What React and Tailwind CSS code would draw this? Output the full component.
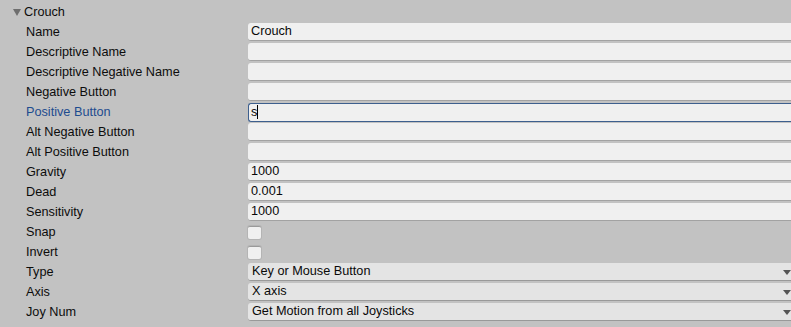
import { useState } from "react";

const rows = [
  { label: "Name", kind: "text", value: "Crouch" },
  { label: "Descriptive Name", kind: "text", value: "" },
  { label: "Descriptive Negative Name", kind: "text", value: "" },
  { label: "Negative Button", kind: "text", value: "" },
  { label: "Positive Button", kind: "text", value: "s", active: true },
  { label: "Alt Negative Button", kind: "text", value: "" },
  { label: "Alt Positive Button", kind: "text", value: "" },
  { label: "Gravity", kind: "text", value: "1000" },
  { label: "Dead", kind: "text", value: "0.001" },
  { label: "Sensitivity", kind: "text", value: "1000" },
  { label: "Snap", kind: "check" },
  { label: "Invert", kind: "check" },
  { label: "Type", kind: "select", value: "Key or Mouse Button" },
  { label: "Axis", kind: "select", value: "X axis" },
  { label: "Joy Num", kind: "select", value: "Get Motion from all Joysticks" },
];

const Field = ({ row }) => {
  if (row.kind === "check") {
    return (
      <div className="w-[13px] h-[13px] bg-[#f0f0f0] border-t border-[#9a9a9a] rounded-[2px] shadow-[0_0_0_1px_#b4b4b4]" />
    );
  }
  if (row.kind === "select") {
    return (
      <div className="h-[18px] flex-1 flex items-center justify-between bg-[#e4e4e4] border-b border-[#999] rounded-l-[3px] pl-[4px] pr-0 text-[#090909]">
        <span className="pt-[1px]">{row.value}</span>
        <svg width="8" height="5" viewBox="0 0 8 5" className="mt-[1px]">
          <path d="M0 0 H8 L4 5 Z" fill="#555" />
        </svg>
      </div>
    );
  }
  if (row.active) {
    return (
      <div className="h-[19px] flex-1 flex items-center bg-[#f0f0f0] border border-[#3d5f8e] border-r-0 rounded-l-[3px] pl-[2px] text-[#090909]">
        <span className="pt-[1px]">{row.value}</span>
        <span className="w-px h-[14px] bg-black" />
      </div>
    );
  }
  return (
    <div className="h-[18px] flex-1 flex items-center bg-[#f0f0f0] border-b border-[#a2a2a2] rounded-l-[3px] pl-[3px] text-[#090909]">
      <span className="pt-[1px]">{row.value}</span>
    </div>
  );
};

export default function App() {
  const [open] = useState(true);
  return (
    <div
      className="w-[791px] h-[327px] bg-[#c2c2c2] pt-[2px] text-[12.7px] overflow-hidden"
      style={{ fontFamily: '"Liberation Sans", Arial, sans-serif' }}
    >
      <div className="h-[20px] flex items-center pl-[13px] text-[#0c0c0c]">
        <svg width="8" height="7" viewBox="0 0 8 7" className="mr-[3px] mt-[1px]">
          <path d="M0 0 H8 L4 7 Z" fill="#6e6e6e" />
        </svg>
        <span className="mt-[2px]">Crouch</span>
      </div>
      {open &&
        rows.map((row) => (
          <div key={row.label} className="h-[20px] flex items-center">
            <div
              className={`w-[248px] shrink-0 pl-[26px] mt-[2px] ${
                row.active ? "text-[#1e4c8f]" : "text-[#0c0c0c]"
              }`}
            >
              {row.label}
            </div>
            <div className="flex-1 flex items-center">
              <Field row={row} />
            </div>
          </div>
        ))}
    </div>
  );
}
